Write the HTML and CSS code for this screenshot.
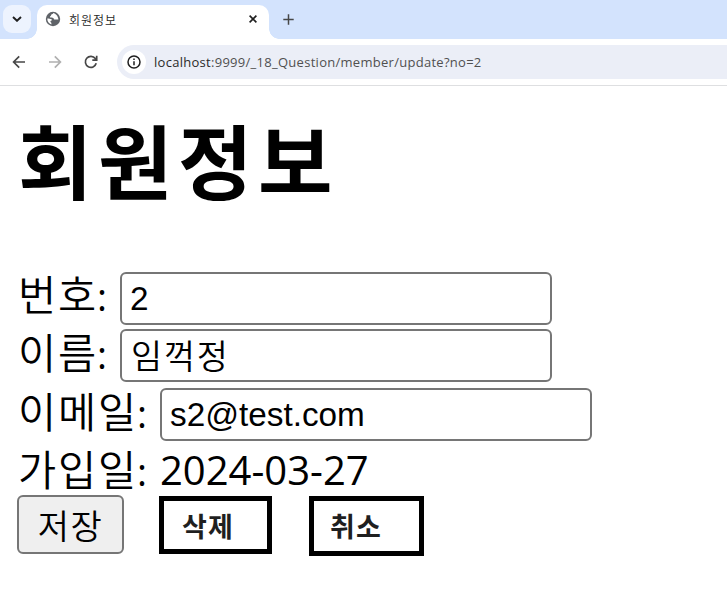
FILE: index.html
```html
<!DOCTYPE html>
<html lang="ko">
<head>
<meta charset="utf-8">
<title>회원정보</title>
<link rel="stylesheet" href="styles.css">
</head>
<body>
<header class="tabs">
  <div class="tab-search"><svg width="10" height="6" viewBox="0 0 10 6" fill="none" stroke="#1f1f1f" stroke-width="1.9"><path d="M1 1l4 3.800L9 1"/></svg></div>
  <div class="tab">
    <svg class="globe" width="16" height="16" viewBox="0 0 16 16"><circle cx="8" cy="8" r="7.200" fill="#5f6368"/><path d="M8.300 2.100C8 3.300 7 3.200 6.400 3.600c-.6.5 0 1.100-.8 1.500-.6.3-.8.9-.2 1.300.7.4 2 .1 2.800.6.900.5.5 1.500 1.500 1.600h3.700C13.200 6.200 12 3.300 8.300 2.100zM2.300 7.600c-.1 2.700 1.500 5 4.100 6v-1.400c0-.7-.6-.8-.9-1.300-.2-.5.1-1.100 1-1.300.7-.2.5-1-.1-1.300-.9-.4-2.500-.7-4.100-.7z" fill="#fff"/></svg>
    <span class="tab-title">회원정보</span>
    <svg width="8" height="8" viewBox="0 0 8 8" stroke="#1f1f1f" stroke-width="1.600"><path d="M.6.6l6.800 6.800M7.400.6L.6 7.400"/></svg>
  </div>
  <svg class="plus" width="11" height="11" viewBox="0 0 11 11" stroke="#474747" stroke-width="1.500"><path d="M5.500.3v10.400M.3 5.500h10.400"/></svg>
</header>
<nav class="toolbar">
  <svg width="14" height="14" viewBox="0 0 14 14" fill="none" stroke="#474747" stroke-width="1.700"><path d="M13 7H2M7.200 1.400L1.600 7l5.600 5.600"/></svg>
  <svg class="forward" width="14" height="14" viewBox="0 0 14 14" fill="none" stroke="#b0b0b0" stroke-width="1.700"><path d="M1 7h11M6.800 1.400L12.400 7l-5.600 5.600"/></svg>
  <svg class="reload" width="14" height="14" viewBox="0 0 14 14" fill="none" stroke="#474747" stroke-width="1.700"><path d="M12.200 8.300A5.500 5.500 0 1 1 11.300 3.600L12.500 5M12.700.8V5.200H8.300"/></svg>
  <div class="address">
    <span class="info"><svg width="14" height="14" viewBox="0 0 14 14" fill="none" stroke="#1f1f1f" stroke-width="1.500"><circle cx="7" cy="7" r="6"/><path d="M7 6.200v4M7 3.500v1.500"/></svg></span>
    <span class="url"><span class="host">localhost</span>:9999/_18_Question/member/update?no=2</span>
  </div>
</nav>
<main>
  <h1>회원정보</h1>
  <form>
    <div class="row number"><label for="no">번호<span class="colon">:</span></label><input id="no" type="text" value="2"></div>
    <div class="row name"><label for="name">이름<span class="colon">:</span></label><input id="name" type="text" value="임꺽정"></div>
    <div class="row email"><label for="email">이메일<span class="colon">:</span></label><input id="email" type="text" value="s2@test.com"></div>
    <div class="row joined"><span class="label">가입일<span class="colon">:</span></span><span class="date">2024-03-27</span></div>
    <div class="actions">
      <button class="save" type="button">저장</button>
      <button class="box delete" type="button">삭제</button>
      <button class="box cancel" type="button">취소</button>
    </div>
  </form>
</main>
</body>
</html>
```
FILE: styles.css
```css
* { box-sizing: border-box; }
body { margin: 0; background: #fff; color: #000; font-family: "Noto Sans CJK KR", sans-serif; overflow: hidden; }
svg { display: block; flex: none; }

.tabs { display: flex; height: 39px; background: #d3e3fd; padding-left: 3px; }
.tab-search { width: 28px; height: 28px; margin-top: 5px; border-radius: 9px; background: #edf3fe; display: flex; align-items: center; justify-content: center; }
.tab { position: relative; display: flex; align-items: center; width: 232px; height: 34px; margin: 5px 0 0 6px; padding: 0 12px 6px 8px; background: #fff; border-radius: 10px 10px 0 0; }
.tab::before, .tab::after { content: ""; position: absolute; bottom: 0; width: 10px; height: 10px; }
.tab::before { left: -10px; background: radial-gradient(circle at 0 0, transparent 9.5px, #fff 10px); }
.tab::after { right: -10px; background: radial-gradient(circle at 100% 0, transparent 9.5px, #fff 10px); }
.tab-title { flex: 1; margin: 1px 0 0 8px; font: 350 12px/16px "Noto Sans CJK KR", sans-serif; letter-spacing: 1px; color: #1f1f1f; }
.plus { margin: 14px 0 0 14px; }

.toolbar { display: flex; align-items: center; height: 47px; padding-left: 12px; border-bottom: 1px solid #dedfe1; }
.forward { margin-left: 22px; }
.reload { margin-left: 22px; }
.address { display: flex; align-items: center; flex: 1; height: 34px; margin-left: 19px; padding-left: 5px; background: #ebeef7; border-radius: 17px 0 0 17px; }
.info { display: flex; align-items: center; justify-content: center; width: 24px; height: 24px; border-radius: 50%; background: #fff; }
.url { margin-left: 8px; font: 400 13px/18px "Open Sans", sans-serif; letter-spacing: 0.28px; color: #505050; white-space: nowrap; }
.host { color: #2a2a2a; }

main { padding: 24px 17px 0; }
h1 { margin: 0; height: 162px; padding-left: 1px; font: 700 81px/95px "Noto Sans CJK KR", sans-serif; letter-spacing: 5.5px; }
.row { display: flex; height: 57px; }
.row label, .label { padding-left: 1px; font-size: 41.5px; line-height: 44px; font-weight: 350; letter-spacing: 1.8px; width: 103px; white-space: nowrap; }
.number label { line-height: 42px; }
.colon { font: 400 38px/40px "Open Sans", sans-serif; letter-spacing: 0; margin-left: -1px; }
.row input { width: 432px; height: 53px; margin: 0; padding: 0 8px; border: 2px solid #767676; border-radius: 6px; background: #fff; color: #000; font: 33.3px "Liberation Sans", sans-serif; }
.name { height: 59px; }
.name input { padding: 0 8px 3px 9px; font: 350 33.8px "Noto Sans CJK KR", sans-serif; letter-spacing: 1.8px; }
.email label, .joined .label { width: 143px; }
.joined { height: 50px; }
.joined .label { padding-top: 1px; }
.date { padding-top: 2px; font: 400 40px/46px "Open Sans", sans-serif; white-space: nowrap; }
.actions { display: flex; align-items: flex-start; }
button { font-family: "Noto Sans CJK KR", sans-serif; margin: 0; white-space: nowrap; }
.save { width: 107px; height: 59px; padding: 0; border: 2px solid #767676; border-radius: 6px; background: #efefef; color: #000; font-size: 34px; font-weight: 350; letter-spacing: 1.5px; line-height: 50px; }
.box { border: 5px solid #000; background: #fff; color: #1f1f1f; font-size: 27px; font-weight: 700; letter-spacing: 1.2px; line-height: 40px; text-align: left; border-radius: 0; }
.delete { width: 113px; height: 58px; margin: 1px 0 0 35px; padding: 2px 0 0 18px; }
.cancel { width: 115px; height: 60px; margin: 1px 0 0 37px; padding: 0 0 0 16px; }
```
